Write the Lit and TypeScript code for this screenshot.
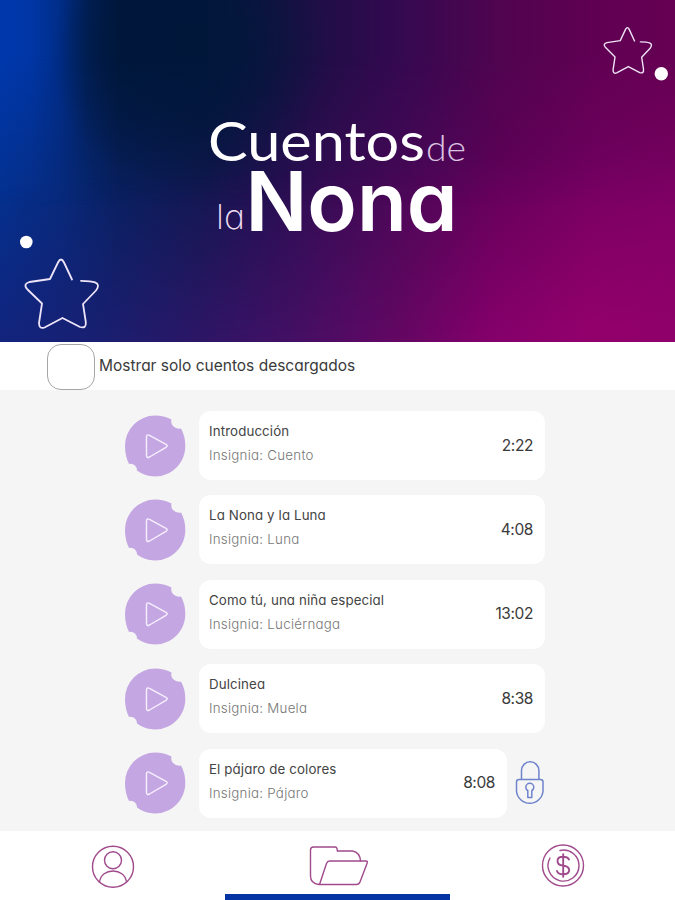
import { LitElement, html, css, svg } from "lit";
import { customElement, property } from "lit/decorators.js";

interface Story {
  title: string;
  badge: string;
  time: string;
  locked?: boolean;
}

const stories: Story[] = [
  { title: "Introducción", badge: "Cuento", time: "2:22" },
  { title: "La Nona y la Luna", badge: "Luna", time: "4:08" },
  { title: "Como tú, una niña especial", badge: "Luciérnaga", time: "13:02" },
  { title: "Dulcinea", badge: "Muela", time: "8:38" },
  { title: "El pájaro de colores", badge: "Pájaro", time: "8:08", locked: true },
];

const starPath = svg`<path d="M48.500 22.500 L40.500 5.500 Q37.500 -0.500 34.500 5.500 L26.500 22 L6 25 Q-1 27 4 32.500 L18.500 46.500 L15.500 66 Q15.500 72.500 21 70.500 L39 61 L56.500 70 Q63 72 62.300 65 L59.500 47 L72.500 33.500 Q77 27.500 71.500 25.300 Q68 24 57.500 23.800" vector-effect="non-scaling-stroke"/>`;

@customElement("story-header")
class StoryHeader extends LitElement {
  static styles = css`
    :host { display: block; position: relative; height: 342px; overflow: hidden; }
    .wash { position: absolute; inset: 0; }
    .low { background: linear-gradient(90deg, #14227a 0, #1b1f72 100px, #2f1668 200px, #470f65 300px, #640763 400px, #83006a 490px, #92006c 590px, #8f006a 675px); }
    .mid {
      background: linear-gradient(90deg, #04318f 0, #072a7c 60px, #08205f 120px, #111850 200px, #230f50 270px, #380b53 340px, #4e0657 430px, #600059 500px, #720061 600px, #790063 675px);
      mask-image: linear-gradient(176deg, #000 48%, transparent 94%);
    }
    .top {
      background: linear-gradient(90deg, #0038ac 0, #0036a6 30px, #002d88 60px, #001f56 88px, #00173c 118px, #00173b 205px, #0d1440 255px, #1c0f45 305px, #340950 400px, #50044f 500px, #610053 600px, #650052 675px);
      mask-image: linear-gradient(180deg, #000 16%, transparent 60%);
    }
    .shade { background: radial-gradient(ellipse 140px 135px at 190px 55px, rgba(0, 23, 58, 0.75) 0, rgba(0, 23, 58, 0.55) 45%, rgba(0, 23, 58, 0.2) 78%, rgba(0, 23, 58, 0) 100%); }
    svg { position: absolute; left: 0; top: 0; }
    .outline { fill: none; stroke: #eee4f8; stroke-linecap: round; stroke-linejoin: round; }
    .word { font-family: Lato, sans-serif; fill: #fff; }
    .single { font-family: Inter, sans-serif; font-feature-settings: "cv11"; fill: #fff; }
    .light { font-weight: 300; fill: #dcc3e2; }
    .thin { font-weight: 200; fill: #ecdcf0; }
    .bold { font-weight: 600; }
  `;
  render() {
    return html`
      <div class="wash low"></div>
      <div class="wash mid"></div>
      <div class="wash top"></div>
      <div class="wash shade"></div>
      <svg width="675" height="342" viewBox="0 0 675 342">
        <text class="word" x="208" y="161" font-size="54" textLength="217" lengthAdjust="spacingAndGlyphs">Cuentos</text>
        <text class="word light" x="426" y="161" font-size="34.500" textLength="40" lengthAdjust="spacingAndGlyphs">de</text>
        <text class="single thin" x="216" y="229" font-size="34" textLength="29" lengthAdjust="spacingAndGlyphs">la</text>
        <text class="single bold" x="245.500" y="231" font-size="82" textLength="212" lengthAdjust="spacingAndGlyphs">Nona</text>
        <g class="outline" stroke-width="1.8" transform="translate(23.500 257)">${starPath}</g>
        <g class="outline" stroke-width="1.4" transform="translate(603 26) scale(.65 .665)">${starPath}</g>
        <circle cx="26.300" cy="242" r="6.300" fill="#fff" />
        <circle cx="661.300" cy="73.700" r="6.700" fill="#fff" />
      </svg>
    `;
  }
}

@customElement("story-row")
class StoryRow extends LitElement {
  @property({ attribute: false }) story!: Story;
  static styles = css`
    :host { display: flex; align-items: center; height: 69px; }
    .play { width: 62px; height: 62px; margin: 0 13px 0 0; flex: none; }
    .card {
      flex: 1; height: 69px; box-sizing: border-box; padding: 0 12px 0 10px;
      display: flex; align-items: center; justify-content: space-between;
      background: #fff; border-radius: 12px;
      font-family: Inter, sans-serif; font-feature-settings: "cv11";
    }
    .texts { display: flex; flex-direction: column; height: 100%; }
    .title { font-size: 13.3px; line-height: 18px; margin-top: 11px; letter-spacing: 0.12px; color: #444; white-space: nowrap; }
    .badge { font-size: 13.3px; line-height: 18px; margin-top: 6px; letter-spacing: 0.26px; font-weight: 300; color: #777; white-space: nowrap; }
    .time { font-size: 15.5px; color: #3a3a3a; letter-spacing: -0.4px; margin-bottom: 1px; }
    .lock { width: 30px; height: 46px; margin-left: 8px; flex: none; }
  `;
  render() {
    const s = this.story;
    return html`
      <svg class="play" viewBox="0 0 62 62">
        <path fill="#c4a7e2" d="M31 .5 Q40 .5 47.500 4.500 Q46.500 8.500 49 11 Q52.500 14.500 57 13.500 Q61.300 21 61.300 31 A30.300 30.300 0 0 1 13 55.500 Q13 52.500 11 50.500 Q8.500 48.300 5 49 Q1 41 1 31 A30.200 30.500 0 0 1 31 .5Z"/>
        <path fill="none" stroke="#f7efff" stroke-width="1.400" stroke-linejoin="round" d="M22.500 22 Q22.500 19 25.500 20.300 L42 29.300 Q44.500 30.800 42 32.300 L25.500 42 Q22.500 43.500 22.500 40.500Z"/>
      </svg>
      <div class="card">
        <div class="texts">
          <span class="title">${s.title}</span>
          <span class="badge">Insignia: ${s.badge}</span>
        </div>
        <span class="time">${s.time}</span>
      </div>
      ${s.locked
        ? html`<svg class="lock" viewBox="0 0 30 46" fill="none" stroke="#6f84cc" stroke-width="1.500" stroke-linejoin="round">
            <path d="M6.500 19.500V10.500a8.700 8.700 0 0 1 17.400 0v9"/>
            <path d="M4 19.500H25.500Q28 19.500 28 22V31A13.300 13.500 0 0 1 1.500 31V22Q1.500 19.500 4 19.500Z"/>
            <path d="M12.800 37.500V30.500Q10.800 29.500 10.800 27.500A4 4.200 0 0 1 18.800 27.500Q18.800 29.500 16.800 30.500V37.500Z"/>
          </svg>`
        : null}
    `;
  }
}

@customElement("app-root")
class AppRoot extends LitElement {
  static styles = css`
    :host { display: flex; flex-direction: column; width: 675px; height: 900px; background: #fff; overflow: hidden; }
    .filter {
      display: flex; align-items: center; gap: 4px; height: 48px; box-sizing: border-box;
      padding: 2px 0 1px 47px; font-family: Inter, sans-serif; font-feature-settings: "cv11";
      font-size: 15.5px; color: #3a3a3a;
    }
    .check { width: 48px; height: 46px; box-sizing: border-box; border: 1px solid #a5a5a5; border-radius: 14px; }
    .label { line-height: 20px; margin-bottom: 2px; }
    .list {
      display: flex; flex-direction: column; gap: 15.4px; height: 441px; box-sizing: border-box;
      padding: 21px 130px 0 124px; background: #f5f5f5;
    }
    .nav { display: grid; grid-template-columns: repeat(3, 225px); height: 69px; }
    .tab { display: flex; flex-direction: column; align-items: center; justify-content: space-between; }
    .icon { width: 60px; height: 44px; margin-top: 13px; fill: none; stroke: #a04a8c; stroke-width: 1.4; stroke-linejoin: round; stroke-linecap: round; }
    .bar { width: 225px; height: 6px; background: #0434a4; }
  `;
  render() {
    return html`
      <story-header></story-header>
      <div class="filter">
        <span class="check"></span>
        <span class="label">Mostrar solo cuentos descargados</span>
      </div>
      <div class="list">${stories.map((s) => html`<story-row .story=${s}></story-row>`)}</div>
      <div class="nav">
        <div class="tab">
          <svg class="icon" viewBox="0 0 60 44">
            <circle cx="30" cy="22.700" r="20.500"/>
            <circle cx="30" cy="16.200" r="8.500"/>
            <path d="M16.500 38C17.500 30.500 23.500 27 30 27S42.500 30.500 43.500 38"/>
          </svg>
        </div>
        <div class="tab">
          <svg class="icon" viewBox="0 0 60 44">
            <path d="M11 40.500Q2.500 39.500 2.500 32V6Q2.500 3 5.500 3H27Q29.300 3 29.300 7H44.500Q52 8.500 52.500 17"/>
            <path d="M21.500 17H58Q60 17 59 19.500L52 38Q51 40.500 48.500 40.500H11.500L18.500 19.500Q19.500 17 21.500 17Z"/>
          </svg>
          <span class="bar"></span>
        </div>
        <div class="tab">
          <svg class="icon" viewBox="0 0 60 44">
            <circle cx="30" cy="21.500" r="20.500"/>
            <path d="M27 6.500A15.500 15.500 0 1 1 17 14"/>
            <path stroke-width="1.900" d="M36 15.500Q34.500 12.800 30 12.800Q24.500 12.800 24.500 17T30 21.500Q36.200 22.300 36.200 26.300T30 30.300Q25 30.300 24 27M30.200 10.300V32.800"/>
          </svg>
        </div>
      </div>
    `;
  }
}
